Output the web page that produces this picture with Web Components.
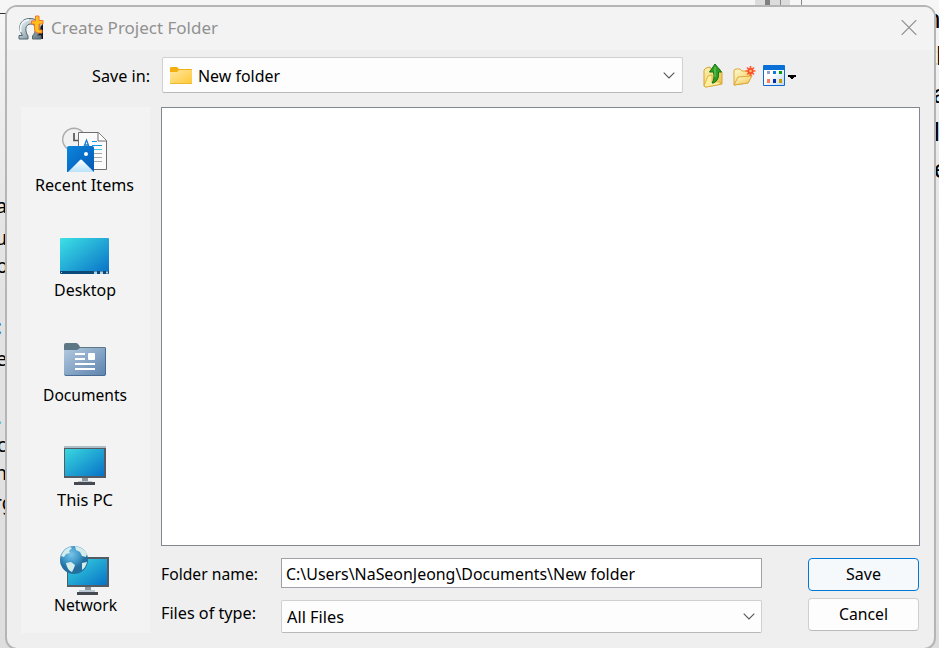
<!DOCTYPE html>
<html lang="en"><head><meta charset="utf-8"><title>Create Project Folder</title>
<style>html,body{margin:0;width:939px;height:648px;overflow:hidden;background:#f3f3f3;font:16px/22px "Noto Sans","Open Sans",sans-serif;color:#000}</style></head>
<body><save-screen></save-screen>
<script>
const define=(name,html,ready)=>{
  const t=document.createElement('template');t.innerHTML=html;
  customElements.define(name,class extends HTMLElement{
    connectedCallback(){if(this.shadowRoot)return;this.attachShadow({mode:'open'}).append(t.content.cloneNode(true));if(ready)ready(this,this.shadowRoot)}
  });
};
/* One-line label condensed or widened to the width in its "w" attribute. */
define('fit-text',`<style>:host{display:block;height:22px;white-space:nowrap;flex:none}span{display:inline-block;transform-origin:0 0}</style><span><slot></slot></span>`,(h,r)=>{
  const s=r.querySelector('span'),w=+h.getAttribute('w');h.style.width=w+'px';
  s.style.transform=`scaleX(${w/s.getBoundingClientRect().width})`;
});
const icons={
app:[26,26,`<defs><linearGradient id="g" x2="1" y2="1"><stop stop-color="#f4fafb"/><stop offset=".5" stop-color="#a9bcc3"/><stop offset="1" stop-color="#5b6d76"/></linearGradient></defs><path d="M17 24h8V8l-5 8z" fill="#111820"/><path d="M1 24v-3.500h3.500C-1 13 2 3.500 12 3.500c10 0 13 9.500 7.500 17H23V24h-8.500v-3c4-4 4-12-1.500-12-6 0-6.500 7-3 12v3z" fill="url(#g)" stroke="#53666e"/><path d="M3 17C1 10 5 5 11 5" fill="none" stroke="#f1f9fb" stroke-width="1.500"/><path d="M17.500 1H21v4.500h4V9h-4v6h3v3h-3.500q-4 0-4-4V9h-3V6h4z" fill="#ffc21c" stroke="#f8742b"/>`],
close:[16,15,`<path d="M.700.200l14.600 14.600M15.300.200.700 14.800" stroke="#8b8b8b" stroke-width="1.200"/>`],
folder:[22,17,`<defs><linearGradient id="g" x2="1" y2="1"><stop stop-color="#ffe7a0"/><stop offset="1" stop-color="#ffc835"/></linearGradient></defs><path d="M0 1q0-1 1-1h6l2 2h12q1 0 1 1v5H0z" fill="#f4ae10"/><path d="M0 5h7l2-2h12q1 0 1 1v12q0 1-1 1H1q-1 0-1-1z" fill="url(#g)"/><path d="M0 16.5h22" stroke="#eeb82d"/>`],
chev:[12,7,`<path d="M.7.7 6 6 11.3.7" fill="none" stroke="#555" stroke-width="1.1"/>`],
up:[20,25,`<defs><linearGradient id="g" x2="1" y2="1"><stop stop-color="#fff6b8"/><stop offset="1" stop-color="#e9bb3b"/></linearGradient></defs><path d="M1 23V7l2-2 4-1 2 3 8-1v3h2v12l-5 1-11 2z" fill="url(#g)" stroke="#d4a332"/><path d="M1 23l4-10 4-1v7h7l3 1-5 2-11 2z" fill="#ffef9e" stroke="#dba938" stroke-width=".8"/><path d="M9 20q3-4 1.500-11H6.500L12 1l6.500 8H15.500q1 8-5 11z" fill="#2f9e28" stroke="#127314"/><path d="M12 4v10" stroke="#69c34e" stroke-width="1.300"/>`],
fresh:[23,21,`<defs><linearGradient id="g" x2="1" y2="1"><stop stop-color="#fffbd0"/><stop offset="1" stop-color="#f0c34b"/></linearGradient></defs><path d="M1 19V4l2-1h4l2 2h7v4h3l-4 8z" fill="url(#g)" stroke="#dba83b"/><path d="M1 19 5 11l14-1-4 7z" fill="url(#g)" stroke="#dba83b"/><path d="M17.500 0v10M12.500 5h10M14 1.500l7 7M21 1.500l-7 7" stroke="#ff6038" stroke-width="1.700"/><circle cx="17.500" cy="5" r="3" fill="#ff4b24"/><circle cx="17.500" cy="5" r="1.300" fill="#ffbd73"/>`],
view:[34,21,`<defs><linearGradient id="g" x2="1" y2="1"><stop offset=".4" stop-color="#fff"/><stop offset="1" stop-color="#b9d8f5"/></linearGradient></defs><path d="M.500.500h21v20H.500z" fill="url(#g)" stroke="#1268ce"/><path d="M0 1h1V0h20v1h1v4H0z" fill="#0870d6"/><path d="M4 6h3v3H4z" fill="#9d9cc5"/><path d="M10 6h3v3h-3z" fill="#0c7be1"/><path d="M16 6h3v3h-3z" fill="#0b9919"/><path d="M4 14h3v4H4z" fill="#ff7b55"/><path d="M10 14h3v4h-3z" fill="#082f9b"/><path d="M16 14h3v4h-3z" fill="#c99b05"/><path d="M25 10h8v2h-2v1h-1v1h-2v-1h-1v-1h-2z" fill="#000"/>`],
recent:[48,48,`<defs><linearGradient id="g" x2="1" y2="1"><stop stop-color="#0a86dd"/><stop offset="1" stop-color="#0757b5"/></linearGradient><linearGradient id="h" x2="0" y2="1"><stop stop-color="#fff"/><stop offset="1" stop-color="#b9e2fa"/></linearGradient></defs><circle cx="14" cy="13.500" r="11.300" fill="#f1f1f1" stroke="#ababab" stroke-width="1.400"/><path d="M14 7v7.500h5" fill="none" stroke="#555" stroke-width="1.700"/><path d="M18.500 6.500h20l8 8v29h-28z" fill="#fbfbfb" stroke="#6e6e6e"/><path d="M38 6.500v8.500h8.500" fill="#fff" stroke="#6e6e6e"/><path d="m23.500 22 3-8 3 8m-5-3h4" fill="none" stroke="#197dcc" stroke-width="1.300"/><path d="M32 15.500h5M32 19.500h10" stroke="#1598e6"/><path d="M32 27.500h10M32 31.500h10M32 35.500h10" stroke="#a9a9a9"/><path d="M32 23.500h10" stroke="#46c5e5"/><path d="M7 22q0-2 2-2h23q2 0 2 2v24H7z" fill="url(#g)"/><path d="M8 46 20 34q1-1 2 0l12 12z" fill="url(#h)"/><circle cx="26" cy="28" r="2" fill="#fff"/>`],
desktop:[49,48,`<defs><linearGradient id="g" x2="1" y2="1"><stop stop-color="#3de1e5"/><stop offset="1" stop-color="#086fc6"/></linearGradient></defs><rect y="7" width="49" height="36" rx="1" fill="url(#g)"/><path d="M0 40h49v2l-1 1H1l-1-1z" fill="#0a4979"/><path d="M34 40.500h3v2.500h-3zM40 40.500h3v2.500h-3zM46 40.500h2v2h-2zM1 41h1v1H1z" fill="#b6d2e1"/>`],
documents:[48,48,`<defs><linearGradient id="g" x2="1" y2="1"><stop stop-color="#b3c9df"/><stop offset="1" stop-color="#5c82ad"/></linearGradient></defs><path d="M4 9q0-2 2-2h10q2 0 4 4h25q1 0 1 2v5H4z" fill="#5d7785"/><path d="M4 14h13l3-2h25q1 0 1 1v25q0 2-2 2H6q-2 0-2-2z" fill="url(#g)"/><path d="M4.500 38.500q.5 1 1.500 1h38q1.500 0 1.500-2V12" fill="none" stroke="#496b93"/><path d="M15 18h10M15 23h10M15 28h20M15 33h20" stroke="#fff" stroke-width="2"/><rect x="28" y="17" width="7" height="7" rx="1" fill="#fff"/>`],
pc:[48,48,`<defs><linearGradient id="g" x2="1" y2="1"><stop stop-color="#38d8df"/><stop offset="1" stop-color="#0872c7"/></linearGradient></defs><path d="M4 5h42v32H4z" fill="#555b63"/><path d="M4 5h42v2H4z" fill="#adbdc8"/><path d="M5 8h39v27H5z" fill="url(#g)"/><path d="M22 37h6v4h-6z" fill="#8d98a1"/><path d="M18 40h14v1H18z" fill="#bcc8d1"/><path d="M14 41h21v3H14z" fill="#454b50"/>`],
network:[50,50,`<defs><linearGradient id="g" x2="1" y2="1"><stop stop-color="#38d8df"/><stop offset="1" stop-color="#0872c7"/></linearGradient><radialGradient id="h" cx=".4" cy=".3"><stop stop-color="#78c4e8"/><stop offset=".6" stop-color="#4099c9"/><stop offset="1" stop-color="#236f9d"/></radialGradient></defs><path d="M7 11h42v30H7z" fill="#555b63"/><path d="M8 13h39v26H8z" fill="url(#g)"/><path d="M25 41h6v4h-6z" fill="#8d98a1"/><path d="M19 44h16v2H19z" fill="#bcc8d1"/><path d="M17 46h21v3H17z" fill="#454b50"/><circle cx="14" cy="14" r="14" fill="url(#h)"/><path d="M1 10c2-5 5-8 9-9l2 1-3 3 1 2-4 1-2 3zM15 0q8 1 12 8l-1 3-4-1-2-4-4-2zM6 17l5-1 4 3-1 3-2 4q-5-2-6-9zM22 17l5-1q-1 5-5 8z" fill="#d5eced"/>`]
};
define('ui-icon',`<style>:host{display:block;flex:none}svg{display:block}</style><svg fill="none"></svg>`,(h,r)=>{
  const [w,y,c]=icons[h.getAttribute('name')],s=r.querySelector('svg');
  s.setAttribute('width',w);s.setAttribute('height',y);s.setAttribute('viewBox',`0 0 ${w} ${y}`);s.innerHTML=c;
});
define('place-item',`<style>:host{display:flex;flex-direction:column;align-items:center;height:105px;box-sizing:border-box}.i{height:50px;width:49px}.t{margin-top:-2px}</style><div class="i"><slot name="icon"></slot></div><div class="t"><slot></slot></div>`);
define('text-box',`<style>:host{display:flex;box-sizing:border-box;height:30px;border:1px solid #a0a0a6;background:#fff;padding:4px 0 0 4px}</style><slot></slot>`);
define('drop-box',`<style>:host{display:flex;box-sizing:border-box;border:1px solid #d0d0d0;border-bottom-color:#b9b9b9;background:#fdfdfd;border-radius:2px;align-items:center;padding:0 7px 0 6px}ui-icon{margin-left:auto}</style><slot></slot><ui-icon name="chev"></ui-icon>`);
define('push-button',`<style>:host{display:flex;box-sizing:border-box;width:111px;height:33px;justify-content:center;border:1px solid #cfcfcf;border-bottom-color:#bbb;border-radius:4px;background:#fdfdfd;padding-top:4px}:host([primary]){border-color:#0078d4;background:#f5f9fc}</style><slot></slot>`);
define('title-bar',`<style>:host{display:flex;height:43px;box-sizing:border-box;background:#f3f3f3;color:#919191;padding:8px 17px 0 11px;border-radius:9px 9px 0 0}fit-text{margin:2px auto 0 7px}.x{margin-top:5px}</style><ui-icon name="app"></ui-icon><fit-text w="167">Create Project Folder</fit-text><ui-icon class="x" name="close"></ui-icon>`);
define('tool-row',`<style>:host{display:flex;height:57px;box-sizing:border-box;padding:7px 0 0 85px;align-items:flex-start}.l{margin:8px 12px 0 0}drop-box{width:521px;height:36px}.f{margin-right:6px}.n{margin-top:1px}.a{margin:6px 10px 0 20px}.b{margin:9px 7px 0 0}.c{margin-top:8px}</style>
<fit-text class="l" w="58">Save in:</fit-text><drop-box style="padding-left:7px"><ui-icon class="f" name="folder"></ui-icon><fit-text class="n" w="82">New folder</fit-text></drop-box><ui-icon class="a" name="up"></ui-icon><ui-icon class="b" name="fresh"></ui-icon><ui-icon class="c" name="view"></ui-icon>`);
define('places-bar',`<style>:host{display:block;box-sizing:border-box;width:129px;height:526px;background:#f3f3f3;padding:19px 2px 0 0}</style>
<place-item><ui-icon slot="icon" name="recent"></ui-icon><fit-text w="99">Recent Items</fit-text></place-item>
<place-item><ui-icon slot="icon" name="desktop"></ui-icon><fit-text w="62" style="padding-left:1px">Desktop</fit-text></place-item>
<place-item><ui-icon slot="icon" name="documents"></ui-icon><fit-text w="84">Documents</fit-text></place-item>
<place-item><ui-icon slot="icon" name="pc"></ui-icon><fit-text w="56" style="padding-left:1px">This PC</fit-text></place-item>
<place-item><ui-icon slot="icon" name="network"></ui-icon><fit-text w="63" style="padding-left:2px">Network</fit-text></place-item>`);
define('file-form',`<style>:host{display:grid;grid-template-columns:120px 481px 157px;justify-content:start;padding-top:12px}.f{display:grid;grid-template-rows:30px 33px;row-gap:12px}.f drop-box{padding:0 6px 0 5px}.l{display:flex;flex-direction:column;gap:17px;padding-top:5px}.b{display:grid;gap:7px;padding-left:46px;align-content:start}</style>
<div class="l"><fit-text w="97">Folder name:</fit-text><fit-text w="95">Files of type:</fit-text></div>
<div class="f"><text-box><fit-text w="349">C:\\Users\\NaSeonJeong\\Documents\\New folder</fit-text></text-box><drop-box><fit-text w="57">All Files</fit-text></drop-box></div>
<div class="b"><push-button primary><fit-text w="35">Save</fit-text></push-button><push-button><fit-text w="49">Cancel</fit-text></push-button></div>`);
define('save-dialog',`<style>:host{display:block;box-sizing:border-box;width:931px;height:645px;margin:5px 0 0 5px;border:2px solid #b5b5b5;border-radius:12px;background:#efefef;position:relative}.m{display:flex;padding-left:14px;gap:11px}.list{width:759px;height:439px;box-sizing:border-box;border:1px solid #828790;background:#fff}</style>
<title-bar></title-bar><tool-row></tool-row><div class="m"><places-bar></places-bar><div><div class="list"></div><file-form></file-form></div></div>`);
/* Document window lying behind the dialog; only its edges show. */
define('back-page',`<style>:host{position:absolute;inset:0;overflow:hidden;background:linear-gradient(#f6f6f6,#e4e4e4 35%,#dedede)}span{position:absolute;font:19px/24px "Noto Sans",sans-serif}.r{font:26px/30px "Liberation Sans",sans-serif}i{position:absolute;top:0;height:6px}</style>
<i style="left:755px;width:35px;background:#dcdcdc"></i><i style="left:765px;width:5px;background:#808080"></i><i style="left:780px;width:1px;background:#888"></i><i style="left:801px;width:1px;background:#888"></i>
<i style="left:0;top:13px;width:7px;height:1px;background:#333"></i><i style="left:5px;top:84px;width:2px;height:11px;background:#223"></i>
<span style="right:932px;top:194px">a</span><span style="right:932px;top:226px">u</span><span style="right:931px;top:254px">o</span><span style="right:937px;top:315px;color:#1674c4">:</span><span style="right:932px;top:347px">e</span><span style="right:937px;top:405px;color:#51b6df">.</span><span style="right:933px;top:433px">c</span><span style="right:932px;top:461px">n</span><span style="left:-6px;top:491px">rg</span>
<span class="r" style="left:926px;top:4px">n</span><span class="r" style="left:929px;top:41px">tl</span><span class="r" style="left:933px;top:79px">a</span><span class="r" style="left:934px;top:117px">l</span><span class="r" style="left:934px;top:154px">e</span>`);
define('save-screen',`<style>:host{display:flow-root;position:relative;width:939px;height:648px;overflow:hidden}</style><back-page></back-page><save-dialog></save-dialog>`);
</script></body></html>
